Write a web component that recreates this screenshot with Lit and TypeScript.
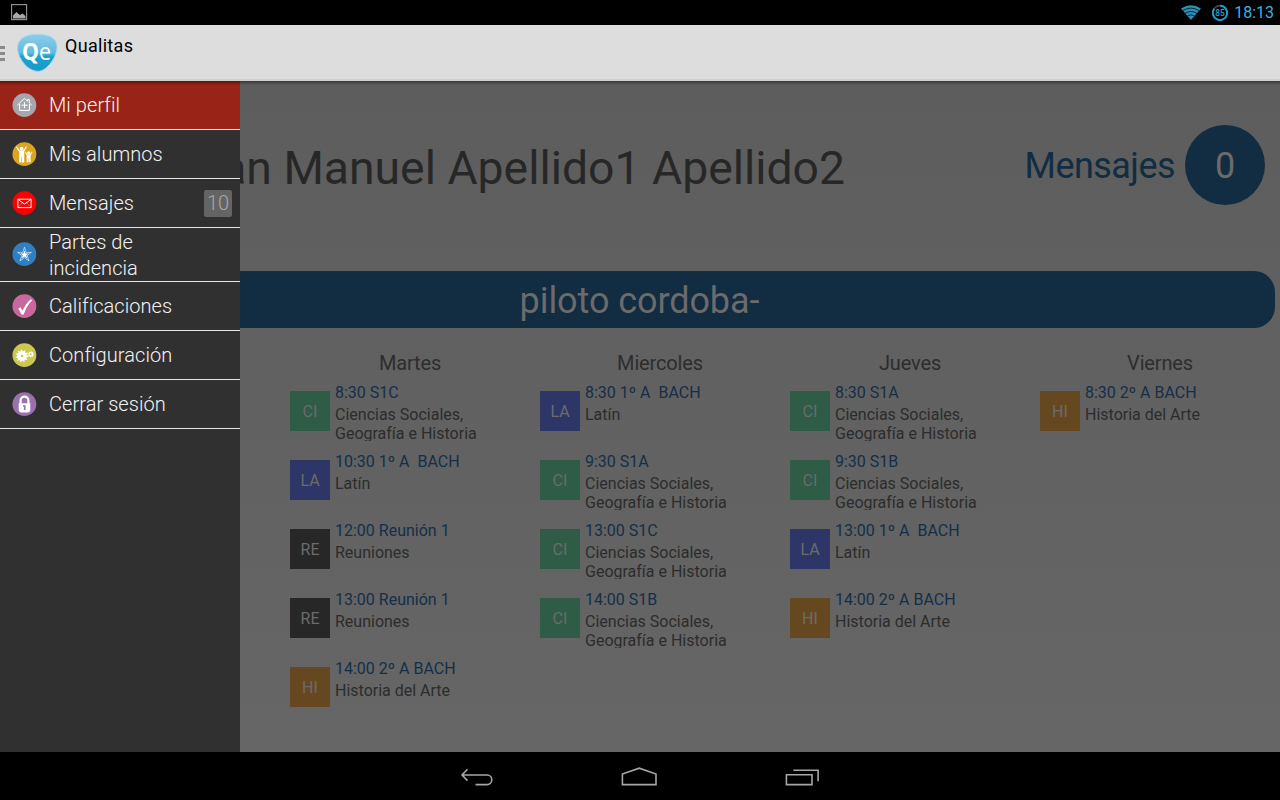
import { LitElement, html, css, svg } from "lit";
import { customElement, property } from "lit/decorators.js";

interface Lesson { code: string; time: string; name: string; }
interface Day { name: string; lessons: Lesson[]; }

const SOC = "Ciencias Sociales,\nGeografía e Historia";
const lesson = (code: string, time: string, name: string): Lesson => ({ code, time, name });

const DAYS: Day[] = [
  { name: "Martes", lessons: [
    lesson("CI", "8:30 S1C", SOC),
    lesson("LA", "10:30 1º A  BACH", "Latín"),
    lesson("RE", "12:00 Reunión 1", "Reuniones"),
    lesson("RE", "13:00 Reunión 1", "Reuniones"),
    lesson("HI", "14:00 2º A BACH", "Historia del Arte"),
  ] },
  { name: "Miercoles", lessons: [
    lesson("LA", "8:30 1º A  BACH", "Latín"),
    lesson("CI", "9:30 S1A", SOC),
    lesson("CI", "13:00 S1C", SOC),
    lesson("CI", "14:00 S1B", SOC),
  ] },
  { name: "Jueves", lessons: [
    lesson("CI", "8:30 S1A", SOC),
    lesson("CI", "9:30 S1B", SOC),
    lesson("LA", "13:00 1º A  BACH", "Latín"),
    lesson("HI", "14:00 2º A BACH", "Historia del Arte"),
  ] },
  { name: "Viernes", lessons: [lesson("HI", "8:30 2º A BACH", "Historia del Arte")] },
];

const gear = (cx: number, cy: number, ro: number, ri: number, n: number) => {
  const p: string[] = [];
  for (let i = 0; i < n * 4; i++) {
    const r = i % 4 < 2 ? ro : ri;
    const a = (i / (n * 4)) * Math.PI * 2;
    p.push(`${(cx + r * Math.cos(a)).toFixed(2)},${(cy + r * Math.sin(a)).toFixed(2)}`);
  }
  return p.join(" ");
};

const GLYPHS: Record<string, { color: string; art: unknown }> = {
  home: { color: "#a6a6ae", art: svg`<path d="M5.3 12.2 12.5 5.4l3 2.800V6.600h1.800v3.300l2.400 2.300M7.600 11v6.400h9.800V11" fill="none" stroke="#fff" stroke-width="1"/><path d="M12.500 9.200v6M9.500 12.200h6" stroke="#fff" stroke-width="1"/>` },
  people: { color: "#dba520", art: svg`<g fill="#fff"><circle cx="9.6" cy="6.700" r="1.900"/><path d="M4.400 4.200 8 8.600h3.200l2.900-4.300.8.500-2.700 5v10.800H10v-5.400h-.6v5.400H7.200V10L3.700 4.700z"/><circle cx="16.700" cy="10.800" r="1.500"/><path d="m13.600 9.500 2 2.900h2.200l2-2.900.7.500-1.900 3.500v6.700h-1.700V16h-.4v4.200h-1.800v-6.700l-1.600-2.900z"/></g>` },
  mail: { color: "#fb0000", art: svg`<path d="M5.900 8.200h13.200v8.400H5.900zM5.900 8.400l6.600 4.700 6.600-4.700" fill="none" stroke="#fff" stroke-width="1"/><path d="M6 16.400l4.400-4.600m8.600 4.600-4.400-4.600" fill="none" stroke="#fff" stroke-opacity=".45" stroke-width=".7"/>` },
  star: { color: "#2f80c3", art: svg`<path d="m12.500 5.200 1.700 5.200h5.200L15.200 13.500l1.800 5.400-4.500-3.300L8 18.900l1.800-5.400-4.200-3.100h5.200z" fill="none" stroke="#fff" stroke-opacity=".85" stroke-width=".7"/><path d="m12.500 8.400 1.100 3h3l-2.400 1.900 1 3.100-2.700-1.900-2.700 1.900 1-3.100-2.400-1.900h3z" fill="#fff"/>` },
  check: { color: "#c9689f", art: svg`<path d="m6.300 14.600 2.200-1.400 2.100 3.500C12.700 12 15.400 8 18.800 5.300l1.400 1C16 10.400 13.600 15 11.700 20.400l-2 .3z" fill="#fff"/>` },
  gears: { color: "#cbc852", art: svg`<polygon points=${gear(10, 13, 6.3, 4.7, 11)} fill="#fff"/><circle cx="10" cy="13" r="1.300" fill="#cbc852"/><polygon points=${gear(18.8, 11.3, 3.2, 2.2, 8)} fill="#fff"/><circle cx="18.800" cy="11.300" r="1.100" fill="#cbc852"/>` },
  lock: { color: "#9a70ad", art: svg`<path d="M8.600 12V8.600a3.900 3.900 0 0 1 7.800 0V12" fill="none" stroke="#fff" stroke-width="2.200"/><path d="M6.700 11.200h11.600v6.300a3 3 0 0 1-3 3H9.700a3 3 0 0 1-3-3z" fill="#fff"/><path d="M11 13.300h2.600v4.700h-1.700v-3.200H11z" fill="#9a70ad"/>` },
};

@customElement("menu-item")
export class MenuItem extends LitElement {
  @property() icon = "home";
  @property() label = "";
  @property() badge = "";
  @property({ type: Boolean }) active = false;

  static styles = css`
    :host { display: block; }
    .row { box-sizing: border-box; height: 49px; border-bottom: 1px solid #e6e6e6; display: flex; align-items: center; padding: 0 8px 0 12px; }
    .row.active { background: #982316; }
    .row.tall { height: 54px; }
    .icon { width: 25px; height: 25px; flex: none; margin-right: 12px; }
    .label { flex: 1; font-size: 20px; font-weight: 300; line-height: 26px; color: #f3f3f3; white-space: pre; letter-spacing: 0.06px; }
    .badge { width: 28px; height: 27px; border-radius: 2px; background: #646464; color: #a9a9a9; font-size: 20px; font-weight: 300; line-height: 27px; text-align: center; }
  `;

  render() {
    const g = GLYPHS[this.icon];
    const tall = this.label.includes("\n");
    return html`<div class="row ${this.active ? "active" : ""} ${tall ? "tall" : ""}">
      <svg class="icon" viewBox="0 0 25 25"><circle cx="12.400" cy="12.200" r="11.900" fill=${g.color} />${g.art}</svg>
      <span class="label">${this.label}</span>
      ${this.badge ? html`<span class="badge">${this.badge}</span>` : ""}
    </div>`;
  }
}

@customElement("app-root")
export class AppRoot extends LitElement {
  static styles = css`
    :host { display: block; width: 1280px; height: 800px; overflow: hidden; font-family: Roboto, "Liberation Sans", sans-serif; }
    .screen { height: 800px; display: flex; flex-direction: column; background: #000; }
    .status { height: 25px; flex: none; box-sizing: border-box; display: flex; align-items: center; padding: 0 6px 0 11px; }
    .photo { width: 17px; height: 17px; margin-right: auto; }
    .wifi { width: 20px; height: 15px; margin-right: 10px; }
    .battery { width: 18px; height: 18px; margin-right: 5px; }
    .clock { font-size: 16px; line-height: 25px; color: #33b5e5; }
    .bar { height: 56px; flex: none; box-sizing: border-box; background: #ddd; border-bottom: 2px solid #cfcfcf; display: flex; }
    .handle { width: 5px; display: flex; flex-direction: column; gap: 3px; padding-top: 21px; }
    .handle i { height: 3px; background: #8a8a8a; }
    .logo { width: 42px; height: 42px; margin: 7px 7px 0 11px; }
    .title { font-size: 18px; line-height: 24px; margin-top: 9px; color: #000; letter-spacing: 0.3px; }
    .body { flex: none; height: 671px; position: relative; overflow: hidden; background: linear-gradient(#5d5d5d, #666); }
    .drawer { position: absolute; left: 0; top: 0; width: 240px; height: 671px; background: #303030; }
    .shade { position: absolute; left: 0; top: 0; right: 0; height: 4px; background: linear-gradient(rgba(0,0,0,.4), rgba(0,0,0,0)); }
    .head { height: 190px; box-sizing: border-box; padding: 44px 15px 0 0; display: flex; align-items: flex-start; }
    .name { width: 845px; margin-right: auto; text-align: right; white-space: nowrap; font-size: 46.3px; line-height: 87px; color: #272727; }
    .messages { font-size: 36px; line-height: 82px; color: #122c42; margin-right: 10px; letter-spacing: -0.55px; }
    .count { width: 80px; height: 80px; border-radius: 50%; background: #122c42; color: #6b6b6b; font-size: 36px; line-height: 82px; text-align: center; }
    .centre { margin: 0 5px; height: 57px; border-radius: 21px; background: #122c42; color: #6b6b6b; font-size: 36px; line-height: 61px; text-align: center; letter-spacing: -0.08px; padding-right: 1px; box-sizing: border-box; }
    .week { display: grid; grid-template-columns: repeat(4, 250px); padding: 22px 0 0 285px; }
    .day { font-size: 20px; line-height: 26px; color: #2d2d2d; text-align: center; letter-spacing: -0.15px; }
    .lesson { height: 59px; margin-bottom: 10px; overflow: hidden; display: flex; padding-left: 5px; gap: 5px; }
    .list { padding-top: 6px; }
    .code { width: 40px; height: 40px; margin-top: 9px; flex: none; color: #6b6b6b; font-size: 16px; line-height: 41px; text-align: center; }
    .CI { background: #2e5c47; } .LA { background: #2e3668; } .RE { background: #272727; } .HI { background: #664820; }
    .time { font-size: 16px; line-height: 19px; padding-top: 1px; color: #142f47; white-space: pre; }
    .subject { font-size: 16px; line-height: 19px; padding-top: 3px; color: #2c2c2c; white-space: pre; }
    .nav { height: 48px; flex: none; display: flex; justify-content: center; align-items: center; gap: 119px; }
    .nav svg { width: 44px; height: 24px; }
  `;

  render() {
    return html`<div class="screen">
      <div class="status">
        <svg class="photo" viewBox="0 0 17 17"><rect x=".6" y=".6" width="15" height="15" fill="none" stroke="#8d8d8d" stroke-width="1.200"/><path d="M2 14.500v-3l2-2 1.500-1.500L7.500 10l1.500 1 2.500-1.500 3 2.500v2.500z" fill="#a8a8a8"/></svg>
        <svg class="wifi" viewBox="0 0 20 15"><path d="M0 3.500Q10-3 20 3.500L10 15z" fill="#2b8fb8"/><path d="M1.800 5.700Q10 .5 18.200 5.700M4 8.400Q10 4.500 16 8.400M6.300 11Q10 8.600 13.700 11" fill="none" stroke="#06202b" stroke-width=".9"/></svg>
        <svg class="battery" viewBox="0 0 18 18"><circle cx="9" cy="8.800" r="7.200" fill="none" stroke="#444" stroke-width="1.600"/><path d="M9 1.600A7.200 7.200 0 1 1 3.200 4.500" fill="none" stroke="#18a0d0" stroke-width="1.900"/><text x="9" y="12.300" text-anchor="middle" font-size="9.500" font-weight="500" textLength="9.600" lengthAdjust="spacingAndGlyphs" fill="#2ba6d3">85</text></svg>
        <span class="clock">18:13</span>
      </div>
      <div class="bar">
        <div class="handle"><i></i><i></i><i></i></div>
        <svg class="logo" viewBox="0 0 42 42">
          <defs><linearGradient id="drop" x1="0" y1="0" x2="0" y2="1"><stop offset="0" stop-color="#8ccdea"/><stop offset=".5" stop-color="#5fbce0"/><stop offset=".6" stop-color="#1ba1cc"/><stop offset="1" stop-color="#1b9bc8"/></linearGradient></defs>
          <path d="M1.500 17C1 8 8 2.400 21 2.300 33 2.200 40.800 6 41 14.500 41.200 25 31 39.300 22 39.400 12 39.500 2.200 27 1.500 17z" fill="url(#drop)" stroke="#a9d9ec" stroke-width="1"/>
          <text x="6" y="27.500" font-family="Open Sans" font-size="23" font-weight="700" fill="#fff" textLength="17" lengthAdjust="spacingAndGlyphs">Q</text>
          <text x="23" y="27.500" font-family="Open Sans" font-size="23" fill="#fff" textLength="12" lengthAdjust="spacingAndGlyphs">e</text>
        </svg>
        <span class="title">Qualitas</span>
      </div>
      <div class="body">
        <div class="head">
          <div class="name">Juan Manuel Apellido1 Apellido2</div>
          <div class="messages">Mensajes</div>
          <div class="count">0</div>
        </div>
        <div class="centre">piloto cordoba-</div>
        <div class="week">
          ${DAYS.map((d) => html`<section>
            <div class="day">${d.name}</div>
            <div class="list">${d.lessons.map((l) => html`<div class="lesson">
              <div class="code ${l.code}">${l.code}</div>
              <div><div class="time">${l.time}</div><div class="subject">${l.name}</div></div>
            </div>`)}</div>
          </section>`)}
        </div>
        <nav class="drawer">
          <menu-item icon="home" label="Mi perfil" active></menu-item>
          <menu-item icon="people" label="Mis alumnos"></menu-item>
          <menu-item icon="mail" label="Mensajes" badge="10"></menu-item>
          <menu-item icon="star" .label=${"Partes de\nincidencia"}></menu-item>
          <menu-item icon="check" label="Calificaciones"></menu-item>
          <menu-item icon="gears" label="Configuración"></menu-item>
          <menu-item icon="lock" label="Cerrar sesión"></menu-item>
        </nav>
        <div class="shade"></div>
      </div>
      <div class="nav">
        <svg viewBox="0 0 44 24" fill="none" stroke="#a6a6a6" stroke-width="1.600"><path d="M12.500 5.300 7 11l5.500 5.600M7.500 11H32a4.800 4.800 0 0 1 0 9.600H20.500"/></svg>
        <svg viewBox="0 0 44 24" fill="none" stroke="#a6a6a6" stroke-width="1.600"><path d="M4.400 20.600V10L21.200 4.200l16.800 5.800v10.600z"/></svg>
        <svg viewBox="0 0 44 24" fill="none" stroke="#a6a6a6" stroke-width="1.600"><path d="M5.400 10.800h25.600v9.800H5.400zM12.300 6.200h24.800v11"/></svg>
      </div>
    </div>`;
  }
}
